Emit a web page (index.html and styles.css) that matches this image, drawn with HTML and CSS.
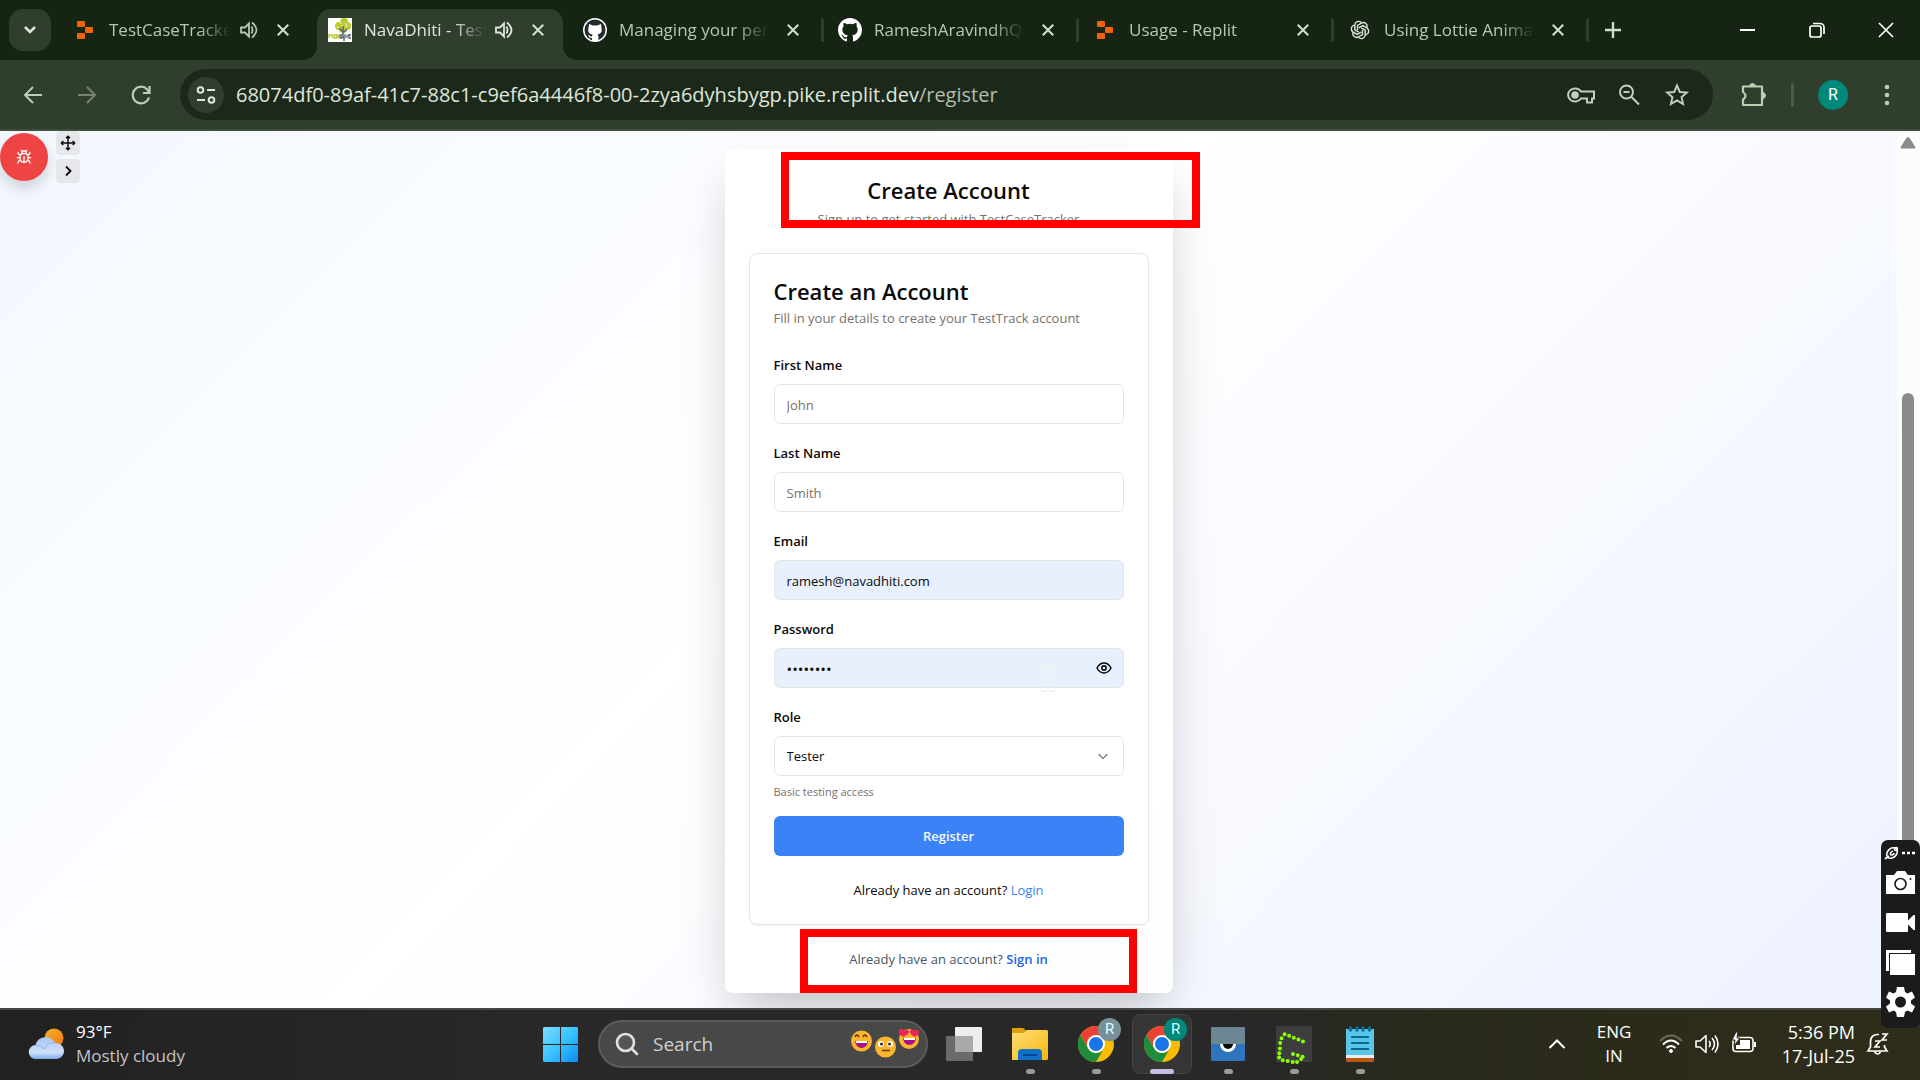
FILE: index.html
```html
<!DOCTYPE html>
<html lang="en">
<head>
<meta charset="utf-8">
<meta name="viewport" content="width=device-width, initial-scale=1">
<title>NavaDhiti - TestCaseTracker</title>
<link rel="stylesheet" href="styles.css">
</head>
<body>
<svg class="defs" aria-hidden="true">
  <symbol id="close" viewBox="0 0 16 16"><path d="M2 2l12 12M14 2L2 14" fill="none" stroke="currentColor" stroke-width="2.4"/></symbol>
  <symbol id="sound" viewBox="0 0 20 20"><path d="M2 7.500h4l4-4v13l-4-4H2zM12.500 6.500q2 3.500 0 7M13 2.500q9 7.500 0 15" fill="none" stroke="currentColor" stroke-width="1.800"/></symbol>
  <symbol id="replit" viewBox="0 0 16 18"><g fill="#f26207"><rect x="0" y="0" width="8" height="6" rx="1"/><rect x="8" y="6" width="8" height="6" rx="1"/><rect x="0" y="12" width="8" height="6" rx="1"/></g></symbol>
  <symbol id="octocat" viewBox="0 0 16 16"><path d="M8 0C3.580 0 0 3.580 0 8c0 3.540 2.290 6.530 5.470 7.590.4.070.55-.17.55-.38 0-.19-.01-.82-.01-1.490-2.010.37-2.530-.49-2.690-.94-.09-.23-.48-.94-.82-1.130-.28-.15-.68-.52-.01-.53.63-.01 1.080.58 1.230.82.72 1.210 1.870.87 2.330.66.07-.52.28-.87.51-1.070-1.780-.2-3.640-.89-3.640-3.950 0-.87.31-1.590.82-2.150-.08-.2-.36-1.020.08-2.120 0 0 .67-.21 2.200.82a7.600 7.600 0 0 1 4 0c1.530-1.040 2.200-.82 2.200-.82.44 1.100.16 1.920.08 2.120.51.56.82 1.270.82 2.150 0 3.070-1.870 3.750-3.650 3.950.29.25.54.73.54 1.480 0 1.070-.01 1.930-.01 2.200 0 .21.15.46.55.38A8 8 0 0 0 16 8c0-4.420-3.580-8-8-8z"/></symbol>
  <symbol id="chrome" viewBox="0 0 36 36">
    <circle cx="18" cy="18" r="18" fill="#fbbc04"/>
    <path d="M2.400 9A18 18 0 0 1 33.600 9H18a9 9 0 0 0-7.800 13.500z" fill="#ea4335"/>
    <path d="M2.400 9A18 18 0 0 0 18 36l7.800-13.500A9 9 0 0 1 10.200 22.500z" fill="#1e8e3e"/>
    <circle cx="18" cy="18" r="9" fill="#fff"/><circle cx="18" cy="18" r="7" fill="#1a73e8"/>
  </symbol>
</svg>

<header class="tabs">
  <button class="tab-search" aria-label="Search tabs"><svg width="16" height="16" viewBox="0 0 16 16"><path d="M3 5l5 5 5-5" fill="none" stroke="currentColor" stroke-width="2.500"/></svg></button>
  <nav class="tab-list">
    <div class="tab"><span class="fav"><svg width="16" height="18"><use href="#replit"/></svg></span><span class="tab-title">TestCaseTracker</span><svg class="sound" width="20" height="20"><use href="#sound"/></svg><button class="tab-close" aria-label="Close tab"><svg width="16" height="16"><use href="#close"/></svg></button></div>
    <div class="tab active"><span class="fav"><svg width="24" height="24" viewBox="0 0 24 24"><path fill="#fff" d="M0 0h24v24H0z"/><g fill="#bccb2c"><circle cx="16" cy="4" r="4"/><circle cx="11" cy="8" r="4"/><circle cx="19" cy="8" r="4"/><circle cx="15" cy="11" r="4"/></g><path d="M12 3l1 3M18 5l1 4M9 9l3 1M14 7l1 3" stroke="#f6f8c8"/><path d="M15 8v12M15 15l4-4M15 14l-4-4M16 19v4" stroke="#59656f" stroke-width="1.500"/><path d="M1 16v4M1 17h3v3M6 17h3v3H6zM10 17l1 3" stroke="#b7c523" fill="none" stroke-width="1.300"/><path d="M12 17h2v3h-2zM17 16v4M19 17v3M21 16v4h2M20 17h3" stroke="#5c6870" fill="none" stroke-width="1.300"/></svg></span><span class="tab-title">NavaDhiti - Test</span><svg class="sound" width="20" height="20"><use href="#sound"/></svg><button class="tab-close" aria-label="Close tab"><svg width="16" height="16"><use href="#close"/></svg></button></div>
    <div class="tab divided"><span class="fav"><svg width="24" height="24" viewBox="0 0 24 24"><circle cx="12" cy="12" r="12" fill="#fff"/><circle cx="12" cy="12" r="10.500" fill="#24292f"/><path fill="#fff" d="M6 6l4 1.500h4L18 6l.5 4c1 4-1 6-4 6.500l1 2v4.500H9v-3c-3 .5-3-2-4-3 2-.5 2 2 4 1.500l.5-2C6 16 4.500 14 5.500 10z"/></svg></span><span class="tab-title">Managing your pers</span><button class="tab-close" aria-label="Close tab"><svg width="16" height="16"><use href="#close"/></svg></button></div>
    <div class="tab divided"><span class="fav"><svg width="24" height="24" fill="#fff"><use href="#octocat"/></svg></span><span class="tab-title">RameshAravindhQA</span><button class="tab-close" aria-label="Close tab"><svg width="16" height="16"><use href="#close"/></svg></button></div>
    <div class="tab divided"><span class="fav"><svg width="16" height="18"><use href="#replit"/></svg></span><span class="tab-title">Usage - Replit</span><button class="tab-close" aria-label="Close tab"><svg width="16" height="16"><use href="#close"/></svg></button></div>
    <div class="tab divided"><span class="fav"><svg width="20" height="20" viewBox="0 0 24 24" fill="none" stroke="#dfe6da" stroke-width="1.700"><path id="petal" d="M9 12V6.500l5-2.900a4.600 4.600 0 0 1 6.500 5.400"/><use href="#petal" transform="rotate(60 12 12)"/><use href="#petal" transform="rotate(120 12 12)"/><use href="#petal" transform="rotate(180 12 12)"/><use href="#petal" transform="rotate(240 12 12)"/><use href="#petal" transform="rotate(300 12 12)"/></svg></span><span class="tab-title">Using Lottie Animat</span><button class="tab-close" aria-label="Close tab"><svg width="16" height="16"><use href="#close"/></svg></button></div>
  </nav>
  <button class="new-tab" aria-label="New tab"><svg width="18" height="18" viewBox="0 0 18 18"><path d="M9 1v16M1 9h16" stroke="currentColor" stroke-width="2.400"/></svg></button>
  <div class="window-controls">
    <button aria-label="Minimize"><svg width="16" height="16" viewBox="0 0 16 16"><path d="M0 8h15" stroke="#fff" stroke-width="2"/></svg></button>
    <button aria-label="Restore"><svg width="16" height="16" viewBox="0 0 16 16" fill="none" stroke="#fff" stroke-width="1.700"><rect x="1" y="4" width="11" height="11" rx="2"/><path d="M4 1.500h7a4 4 0 0 1 4 4V12"/></svg></button>
    <button aria-label="Close"><svg width="16" height="16" viewBox="0 0 16 16"><path d="M1 1l14 14M15 1L1 15" stroke="#fff" stroke-width="1.700"/></svg></button>
  </div>
</header>

<div class="toolbar">
  <button class="tool" aria-label="Back"><svg width="20" height="20" viewBox="0 0 20 20" fill="none" stroke="currentColor" stroke-width="2"><path d="M19 10H2M10 2l-8 8 8 8"/></svg></button>
  <button class="tool dim" aria-label="Forward"><svg width="20" height="20" viewBox="0 0 20 20" fill="none" stroke="currentColor" stroke-width="2"><path d="M1 10h17M10 2l8 8-8 8"/></svg></button>
  <button class="tool" aria-label="Reload"><svg width="20" height="20" viewBox="0 0 20 20" fill="none" stroke="currentColor" stroke-width="2.200"><path d="M18 12.500A8.300 8.300 0 1 1 16 4.200L18 7"/><path d="M18.500 1v7H12"/></svg></button>
  <div class="omnibox">
    <button class="site-info" aria-label="View site information"><svg width="20" height="20" viewBox="0 0 20 20" fill="none" stroke="#dfe6da" stroke-width="2"><circle cx="4.500" cy="5" r="2.800"/><path d="M11 5h8M1 15h8"/><circle cx="15.500" cy="15" r="2.800"/></svg></button>
    <span class="url">68074df0-89af-41c7-88c1-c9ef6a4446f8-00-2zya6dyhsbygp.pike.replit.dev<span class="path">/register</span></span>
    <button class="omni-action" aria-label="Passwords"><svg width="28" height="20" viewBox="0 0 28 20" fill="none" stroke="currentColor" stroke-width="2"><path d="M14 6.500A7 6.500 0 1 0 14 13.500h6v4h5v-4h2v-7z"/><circle cx="8" cy="10" r="2.800" fill="currentColor"/></svg></button>
    <button class="omni-action" aria-label="Zoom"><svg width="22" height="22" viewBox="0 0 22 22" fill="none" stroke="currentColor" stroke-width="2"><circle cx="8.500" cy="8" r="6.500"/><path d="M5.500 8h6M13 12.500l8 8"/></svg></button>
    <button class="omni-action" aria-label="Bookmark this page"><svg width="24" height="24" viewBox="0 0 24 24" fill="none" stroke="currentColor" stroke-width="1.900"><path d="M12 2.500l2.800 6.500 7 .6-5.300 4.600 1.600 6.900-6.100-3.700-6.100 3.700 1.600-6.900-5.300-4.600 7-.6z"/></svg></button>
  </div>
  <button class="tool ext" aria-label="Extensions"><svg width="26" height="26" viewBox="0 0 26 26" fill="none" stroke="currentColor" stroke-width="2.200" stroke-linejoin="round"><path d="M2 4.500h19V23H2v-5.500q5-3.500 0-7.500z"/><path d="M9 4q2-4 5 0zM22 11q4 2.500 0 5z" fill="currentColor"/></svg></button>
  <span class="tool-sep"></span>
  <button class="avatar" aria-label="Profile">R</button>
  <button class="tool menu" aria-label="Menu"><svg width="6" height="22" viewBox="0 0 6 22" fill="currentColor"><circle cx="3" cy="3" r="2.300"/><circle cx="3" cy="11" r="2.300"/><circle cx="3" cy="19" r="2.300"/></svg></button>
</div>

<main class="viewport">
  <div class="page">
    <div class="bug-tools">
      <button class="bug" aria-label="Report a bug"><svg width="16" height="16" viewBox="0 0 24 24" fill="none" stroke="#fff" stroke-width="2" stroke-linecap="round"><path d="M8 2l2 2M14 4l2-2M9 7V6a3 3 0 0 1 6 0v1"/><path d="M12 20c-3.300 0-6-2.700-6-6v-3a4 4 0 0 1 4-4h4a4 4 0 0 1 4 4v3c0 3.300-2.700 6-6 6zM12 20v-9M6.500 9C4.600 8.800 3 7.100 3 5M6 13H2M3 21c0-2.100 1.700-3.900 3.800-4M21 5c0 2.100-1.600 3.800-3.500 4M22 13h-4M17.200 17c2.100.1 3.800 1.900 3.800 4"/></svg></button>
      <div class="mini">
        <button aria-label="Move"><svg width="16" height="16" viewBox="0 0 24 24" fill="none" stroke="#0c0a09" stroke-width="2.200"><path d="M12 2v20M2 12h20M9 5l3-3 3 3M9 19l3 3 3-3M5 9l-3 3 3 3M19 9l3 3-3 3"/></svg></button>
        <button aria-label="Collapse"><svg width="12" height="12" viewBox="0 0 12 12" fill="none" stroke="#0c0a09" stroke-width="1.800"><path d="M4 1.500L8.500 6 4 10.500"/></svg></button>
      </div>
    </div>

    <section class="card">
      <h1>Create Account</h1>
      <p class="sub">Sign up to get started with TestCaseTracker</p>
      <form class="panel">
        <h2>Create an Account</h2>
        <p class="desc">Fill in your details to create your TestTrack account</p>
        <div class="fields">
          <div class="field"><label for="first">First Name</label><input id="first" type="text" placeholder="John"></div>
          <div class="field"><label for="last">Last Name</label><input id="last" type="text" placeholder="Smith"></div>
          <div class="field"><label for="email">Email</label><input id="email" class="filled" type="email" value="ramesh@navadhiti.com"></div>
          <div class="field"><label for="password">Password</label>
            <div class="control"><input id="password" class="filled secret" type="password" value="password"><button type="button" class="eye" aria-label="Show password"><svg width="16" height="16" viewBox="0 0 24 24" fill="none" stroke="#0c0a09" stroke-width="2.300"><path d="M1.500 12q4-7.500 10.500-7.500T22.500 12q-4 7.500-10.500 7.500T1.500 12z"/><circle cx="12" cy="12" r="3.200"/></svg></button>
            <svg class="cursor" width="14" height="26" viewBox="0 0 14 26" fill="none" stroke="#f1f1ee" stroke-width="2"><path d="M0 1h6M8 1h6M7 2v22M0 25h6M8 25h6"/></svg></div></div>
          <div class="field"><label for="role">Role</label>
            <div class="control"><select id="role"><option>Tester</option></select><svg class="caret" width="16" height="16" viewBox="0 0 16 16" fill="none" stroke="#86868a" stroke-width="1.500"><path d="M3.500 6L8 10.500 12.500 6"/></svg></div></div>
        </div>
        <p class="help">Basic testing access</p>
        <button class="register" type="submit">Register</button>
        <p class="login">Already have an account? <a href="#login">Login</a></p>
      </form>
      <p class="signin">Already have an account? <a href="#signin">Sign in</a></p>
      <span class="mark mark-top"></span>
      <span class="mark mark-bottom"></span>
    </section>
  </div>
  <div class="scrollbar"><svg width="16" height="12" viewBox="0 0 16 12"><path d="M8 0q1 0 2 1.500l5 8q1 2-1 2H2q-2 0-1-2l5-8Q7 0 8 0z" fill="#8b8b8b"/></svg><span class="thumb"></span></div>
</main>

<footer class="taskbar">
  <div class="weather">
    <svg width="38" height="32" viewBox="0 0 38 32"><defs><linearGradient id="sun" x2="1" y2="1"><stop stop-color="#f5b52a"/><stop offset="1" stop-color="#f07410"/></linearGradient><linearGradient id="cloud" x2="0" y2="1"><stop stop-color="#a9c6f5"/><stop offset=".7" stop-color="#cfe0f8"/><stop offset="1" stop-color="#7fa9ec"/></linearGradient></defs><circle cx="26" cy="10" r="9.500" fill="url(#sun)"/><path d="M8 31a7 7 0 0 1-.5-14A10.500 10.500 0 0 1 27 15a8 8 0 0 1 2 16z" fill="url(#cloud)"/><path d="M8 17q5 0 8 4 4-7 11-6" fill="none" stroke="#8fb3ee"/></svg>
    <div class="weather-text"><span>93°F</span><span class="muted">Mostly cloudy</span></div>
  </div>
  <div class="apps">
    <button class="app" aria-label="Start"><svg width="35" height="35" viewBox="0 0 35 35"><defs><linearGradient id="win" x2="1" y2="1"><stop stop-color="#7fdcff"/><stop offset=".5" stop-color="#38c3ff"/><stop offset="1" stop-color="#0a8cf5"/></linearGradient></defs><path d="M1 0h16v17H0V1zM18 0h16l1 1v16H18zM0 18h17v17H1l-1-1zM18 18h17v16l-1 1H18z" fill="url(#win)"/></svg></button>
    <label class="search">
      <svg width="24" height="24" viewBox="0 0 24 24" fill="#555" stroke="#e0e0e0" stroke-width="2.600" stroke-linecap="round"><circle cx="10.500" cy="10.500" r="8.500"/><path d="M17 17l5 5"/></svg>
      <input type="text" placeholder="Search" aria-label="Search">
      <svg width="68" height="30" viewBox="0 0 68 30"><g fill="#fdb52b"><circle cx="10.500" cy="12" r="10.500"/><circle cx="34.500" cy="18" r="10.500"/><circle cx="58" cy="10" r="10"/></g><path d="M4 12h13q-1 7-6.500 7T4 12zM52 9h13q-1 7-6.500 7T52 9z" fill="#a5108a"/><path d="M5 12h11v2H5zM53 9h11v2H53z" fill="#fff"/><path d="M4 8q2-4 4 0M12 8q2-4 4 0" fill="none" stroke="#56331a" stroke-width="1.500"/><circle cx="30" cy="15" r="3" fill="#fff"/><circle cx="39" cy="15" r="3" fill="#fff"/><circle cx="30.500" cy="15" r="1.600" fill="#432"/><circle cx="38.500" cy="15" r="1.600" fill="#432"/><path d="M31 21.500h8" stroke="#6b3c16" stroke-width="1.600"/><path d="M52 8q-7-5-3-8 3-1 4 2 3-3 5 0 1 3-6 6zM64 8q-6-3-5-6 2-3 4 0 3-3 5 0 1 3-4 6z" fill="#ee2357"/></svg>
    </label>
    <button class="app" aria-label="Task view"><svg width="36" height="34" viewBox="0 0 36 34"><rect x="9" y="0" width="27" height="25" rx="1" fill="#eee"/><rect x="0" y="9" width="27" height="25" rx="1" fill="#6a6a6a"/><path d="M9 9h18v16H9z" fill="#a9a9a9"/></svg></button>
    <button class="app open" aria-label="File Explorer"><svg width="36" height="34" viewBox="0 0 36 34"><defs><linearGradient id="fold" x2="1" y2="1"><stop stop-color="#ffdf75"/><stop offset="1" stop-color="#f5b70f"/></linearGradient></defs><path d="M0 2q0-1 1-1h10l4 3v4H0z" fill="#dfa108"/><path d="M0 6h12l3-3h20l1 1v28l-1 1H0z" fill="url(#fold)"/><path d="M6 33v-7q0-4 4-4h16q4 0 4 4v7z" fill="#0f70c9"/><path d="M11 28h14" stroke="#0a488c" stroke-width="2"/></svg></button>
    <button class="app open" aria-label="Chrome"><svg width="36" height="36"><use href="#chrome"/></svg><span class="badge grey">R</span></button>
    <button class="app open current" aria-label="Chrome profile R"><svg width="36" height="36"><use href="#chrome"/></svg><span class="badge">R</span></button>
    <button class="app open" aria-label="Screen viewer"><svg width="34" height="34" viewBox="0 0 34 34"><rect width="34" height="34" rx="2" fill="#2f75be"/><path d="M0 17V1l1-1h32l1 1v16z" fill="#6c8793"/><path d="M9 17a8 8 0 0 0 16 0z" fill="#fff"/><path d="M12 17a5 5 0 0 0 10 0z" fill="#090909"/></svg></button>
    <button class="app open" aria-label="Greenshot"><svg width="36" height="36" viewBox="0 0 36 36"><path fill="#3d3d3d" d="M0 0h36v36H0z"/><path d="M27 15.500L9 8Q4 12 4 20T2 30l3 4 12 2M17 28l11 3-7 5" fill="none" stroke="#8eff00" stroke-width="4" stroke-linecap="round" stroke-dasharray="0 5"/></svg></button>
    <button class="app open" aria-label="Notepad"><svg width="28" height="36" viewBox="0 0 28 36"><path d="M0 30h28v5l-1 1H1l-1-1z" fill="#b65a12"/><path d="M0 28h28v4H0z" fill="#eee"/><path d="M0 3h28v26H0z" fill="#59c6e8"/><path d="M5 11h18M5 17h18M5 23h18" stroke="#086a90" stroke-width="2"/><path d="M4.500 2v2M11 2v2M17 2v2M23.500 2v2" stroke="#0b7096" stroke-width="3.500" stroke-linecap="round"/></svg></button>
  </div>
  <div class="tray">
    <svg width="18" height="12" viewBox="0 0 18 12" fill="none" stroke="#fff" stroke-width="2"><path d="M1.500 10L9 2.500l7.500 7.500"/></svg>
    <div class="lang"><span>ENG</span><span>IN</span></div>
    <div class="status">
      <svg width="24" height="20" viewBox="0 0 24 20" fill="none" stroke="#fff" stroke-width="2"><path d="M1 7q11-11 22 0" stroke="#6b6b5c"/><path d="M4 10.500q8-8 16 0M7.500 14q4.500-4 9 0"/><circle cx="12" cy="17" r="1.500" fill="#fff" stroke-width="1"/></svg>
      <svg width="24" height="20" viewBox="0 0 24 20" fill="none" stroke="#fff" stroke-width="1.600" stroke-linejoin="round"><path d="M1 7h4l6-5.500v17L5 13H1zM14 7q2.500 3 0 6M17 4q5 6 0 12M20 1.500q6 8.500 0 17"/></svg>
      <svg width="26" height="20" viewBox="0 0 26 20"><rect x="2" y="3.500" width="20" height="14" rx="3" fill="none" stroke="#fff" stroke-width="1.600"/><path d="M9 6h10v9H5v-4h4zM23 8h2v5h-2z" fill="#fff"/><path d="M5-2L1 6h3l-1 6 6-8H6l1-6z" fill="#fff" stroke="#2b2b1b"/></svg>
    </div>
    <div class="clock"><span>5:36 PM</span><span>17-Jul-25</span></div>
    <svg width="22" height="24" viewBox="0 0 22 24" fill="none" stroke="#fff" stroke-width="1.700"><path d="M12 2.500H10Q3.500 3 3.500 10v5L1 19h19l-2.500-4v-2M7.500 20q3.500 4 6 0M8 9h5l-5 6h5M15 2h5l-5 6h5"/></svg>
  </div>
</footer>

<aside class="recorder">
  <svg width="32" height="14" viewBox="0 0 32 14" fill="none" stroke="#fff" stroke-width="1.600"><ellipse cx="7" cy="7" rx="6" ry="4.500" transform="rotate(-45 7 7)"/><path d="M0 13l4-3M8 5Q4 7 6 9q3 0 3-2"/><circle cx="11" cy="3" r="1.500"/><path d="M17 7h13" stroke-width="2.500" stroke-dasharray="3 2"/></svg>
  <button aria-label="Screenshot"><svg width="29" height="23" viewBox="0 0 29 23"><path d="M0 4h8l3-4h8l3 4h7v19H0z" fill="#fff"/><circle cx="14.500" cy="13" r="5.500" fill="none" stroke="#1b1b1b" stroke-width="1.600"/><circle cx="24.500" cy="8" r="1" fill="#1b1b1b"/></svg></button>
  <button aria-label="Record video"><svg width="29" height="19" viewBox="0 0 29 19" fill="#fff"><rect width="22" height="19" rx="1"/><path d="M21 8.500L27.500 2H29v15h-1.500L21 10.500z"/></svg></button>
  <button aria-label="Gallery"><svg width="29" height="25" viewBox="0 0 29 25" fill="#fff"><path d="M0 0h25v3H3v18H0zM4 4h25v21H4z"/></svg></button>
  <button aria-label="Settings"><svg width="29" height="30" viewBox="0 0 29 30"><path d="M11 0h7l1 5 2.500 1.500 4.500-2 3 6-4 3v3l4 3-3 6-4.500-2L19 25l-1 5h-7l-1-5-2.500-1.500-4.500 2-3-6 4-3v-3l-4-3 3-6 4.500 2L10 5z" fill="#fff"/><circle cx="14.500" cy="15" r="5.500" fill="#1b1b1b"/></svg></button>
</aside>
</body>
</html>
```
FILE: styles.css
```css
* { box-sizing: border-box; }
body {
  position: relative;
  display: flex;
  flex-direction: column;
  min-height: 100vh;
  margin: 0;
  font-family: "Open Sans", "Noto Sans", sans-serif;
  font-size: 13px;
  color: #0c0a09;
}
button { display: flex; align-items: center; justify-content: center; padding: 0; border: 0; background: none; color: inherit; font: inherit; }
h1, h2, p { margin: 0; }
a { text-decoration: none; }
svg { flex: none; overflow: visible; }
.defs { position: absolute; width: 0; height: 0; }

/* Tab strip */
.tabs { display: flex; align-items: center; height: 60px; padding-left: 9px; background: #162413; color: #b6c9b0; }
.tab-search { width: 42px; height: 42px; border-radius: 14px; background: #303e2e; color: #dfe6da; }
.tab-list { display: flex; align-self: stretch; padding: 9px 0 0 11px; }
.tab { position: relative; display: flex; align-items: center; width: 255px; padding: 0 18px 9px 11px; font-size: 17px; }
.tab.active { width: 246px; margin-right: 9px; padding-right: 9px; border-radius: 14px 14px 0 0; background: #303e2e; color: #dfe6da; }
.tab.active::before, .tab.active::after { content: ""; position: absolute; bottom: 0; width: 14px; height: 14px; }
.tab.active::before { right: 100%; background: radial-gradient(circle at 0 0, #162413 14px, #303e2e 14px); }
.tab.active::after { left: 100%; background: radial-gradient(circle at 100% 0, #162413 14px, #303e2e 14px); }
.tab.divided::after { content: ""; position: absolute; top: 9px; right: 3px; width: 3px; height: 24px; border-radius: 2px; background: #303e2e; }
.fav { display: flex; justify-content: center; width: 24px; margin-right: 12px; }
.tab-title { flex: 1; min-width: 0; overflow: hidden; line-height: 26px; white-space: nowrap; mask-image: linear-gradient(90deg, #000 calc(100% - 32px), transparent); }
.sound { margin-left: 8px; }
.tab-close { width: 32px; height: 32px; margin-left: 8px; color: #cfe0c9; }
.tab-close svg { width: 14px; height: 14px; }
.new-tab { width: 32px; height: 32px; margin-left: 5px; color: #cfe0c9; }
.window-controls { display: flex; margin-left: auto; }
.window-controls button { width: 69px; height: 60px; }

/* Address row */
.toolbar { display: flex; align-items: center; height: 71px; padding: 0 6px; border-bottom: 2px solid #40503d; background: #303e2e; color: #b9d0b2; }
.tool { width: 54px; height: 44px; }
.tool.dim { color: #75836f; }
.omnibox { display: flex; flex: 1; align-items: center; height: 51px; margin-left: 12px; padding: 0 12px 0 8px; border-radius: 26px; background: #1c291a; color: #c5ccc0; }
.site-info { width: 36px; height: 36px; border-radius: 18px; background: #303e2e; }
.url { flex: 1; margin-left: 12px; font-size: 20px; white-space: nowrap; color: #dfe6da; }
.path { color: #b4bdae; }
.omni-action { width: 48px; height: 40px; }
.tool.ext { margin-left: 14px; }
.tool-sep { width: 3px; height: 24px; margin: 0 24px 0 10px; border-radius: 2px; background: #4b5c47; }
.avatar { width: 30px; height: 30px; border-radius: 50%; background: #00897b; color: #fff; font-family: Roboto, sans-serif; font-size: 16px; }
.tool.menu { margin-left: 12px; }

/* Web page */
.viewport { display: flex; flex: 1; }
.page { position: relative; flex: 1; padding: 18px 16px 15px; background: linear-gradient(135deg, #eff6ff, #fff 50%, #eef2ff) bottom / 100% 1230px; overflow: hidden; }
.scrollbar { display: flex; flex-direction: column; align-items: center; width: 23px; padding: 6px 1px 24px 0; background: #fcfcfc; }
.thumb { width: 12px; flex: 1; margin-top: 244px; border-radius: 6px; background: #8b8b8b; }
.bug-tools { position: absolute; top: 0; left: 0; display: flex; gap: 8px; }
.bug { width: 48px; height: 48px; margin-top: 2px; border-radius: 50%; background: #ef4444; box-shadow: 0 8px 14px rgba(0, 0, 0, .15); }
.mini { display: grid; gap: 4px; }
.mini button { width: 24px; height: 24px; border-radius: 4px; background: #e5e7eb; }

.card { position: relative; max-width: 448px; margin: 0 auto; padding: 24px; border-radius: 8px; background: rgba(255, 255, 255, .85); box-shadow: 0 25px 50px -12px rgba(0, 0, 0, .25); }
.card h1 { font-size: 22px; line-height: 34px; font-weight: 600; text-align: center; }
.sub, .signin { line-height: 20px; text-align: center; color: #78716c; }
.sub { margin-top: 2px; }
.panel { margin: 24px 0; padding: 24px; border: 1px solid #e5e5e5; border-radius: 8px; background: #fff; box-shadow: 0 1px 2px rgba(0, 0, 0, .05); }
.panel h2 { font-size: 22px; line-height: 26px; font-weight: 600; }
.desc { margin-top: 4px; line-height: 20px; color: #78716c; }
.fields { display: grid; gap: 18px; margin-top: 26px; }
.field { display: grid; gap: 8px; }
.field label { line-height: 22px; font-weight: 600; }
.field input, .field select { width: 100%; height: 40px; padding: 0 12px; border: 1px solid #e5e5e5; border-radius: 6px; background: #fff; color: #0c0a09; font: inherit; appearance: none; outline: 0; }
.field input { padding-top: 2px; }
.field input::placeholder { color: #78716c; }
.field .filled { background: #e8f0fe; }
.field .secret { font-size: 15px; }
.control { position: relative; }
.eye { position: absolute; top: 0; right: 0; width: 40px; height: 40px; }
.caret { position: absolute; top: 12px; right: 13px; pointer-events: none; }
.cursor { position: absolute; top: 18px; left: 267px; }
.help { margin-top: 8px; font-size: 11px; line-height: 16px; color: #78716c; }
.register { width: 100%; height: 40px; margin-top: 16px; border-radius: 6px; background: #3b82f6; color: #f8fafc; font-weight: 600; }
.login { margin-top: 24px; line-height: 20px; text-align: center; }
.login a { color: #3b82f6; }
.signin { color: #4b5563; }
.signin a { color: #2563eb; font-weight: 600; }
.mark { position: absolute; border: 8px solid #f00; pointer-events: none; }
.mark-top { top: 3px; left: 56px; width: 419px; height: 76px; }
.mark-bottom { top: 780px; left: 75px; width: 337px; height: 64px; }

/* Taskbar */
.taskbar { display: grid; grid-template-columns: 1fr auto 1fr; align-items: center; height: 72px; padding-bottom: 2px; border-top: 2px solid #474742; background: linear-gradient(90deg, #212121, #292929 30%, #282828 65%, #2a2a1b 75%, #2e2d1a); color: #fff; font-size: 17px; line-height: 24px; }
.weather { display: flex; align-items: center; gap: 10px; padding-left: 28px; }
.weather-text, .lang, .clock { display: grid; }
.muted { color: #c4c4c4; }
.apps { display: flex; align-items: center; }
.app { position: relative; width: 66px; height: 60px; }
.open::after { content: ""; position: absolute; bottom: 0; left: 29px; width: 9px; height: 5px; border-radius: 3px; background: #9a9a9a; }
.current::before { content: ""; position: absolute; inset: 0 3px; border: 1px solid #454545; border-radius: 8px; background: #353535; }
.current svg { position: relative; }
.current::after { left: 21px; width: 24px; background: #c5c0e3; }
.badge { position: absolute; top: 4px; right: 8px; width: 23px; height: 23px; border-radius: 50%; background: #00897b; color: #dff; font: 15px/23px Roboto, sans-serif; }
.badge.grey { background: #78909c; }
.search { display: flex; align-items: center; width: 330px; height: 48px; margin: 0 3px 0 5px; padding: 0 7px 0 15px; border: 2px solid #5c5c5c; border-radius: 24px; background: #484848; }
.search input { flex: 1; min-width: 0; margin-left: 12px; border: 0; background: none; color: #fff; font: inherit; font-size: 19px; }
.search input::placeholder { color: #d0d0d0; }
.tray { display: flex; align-items: center; justify-content: flex-end; padding-right: 31px; }
.lang { width: 72px; margin: 0 9px 0 12px; text-align: center; }
.status { display: flex; gap: 12px; }
.clock { width: 98px; margin-right: 12px; font-size: 18px; text-align: right; white-space: nowrap; }

/* Floating screen recorder */
.recorder { position: absolute; right: 0; bottom: 52px; display: flex; flex-direction: column; align-items: center; width: 39px; height: 188px; padding: 6px 0; border-radius: 7px; background: #1b1b1b; }
.recorder > svg { margin-bottom: 2px; }
.recorder button { height: 40px; }
```
